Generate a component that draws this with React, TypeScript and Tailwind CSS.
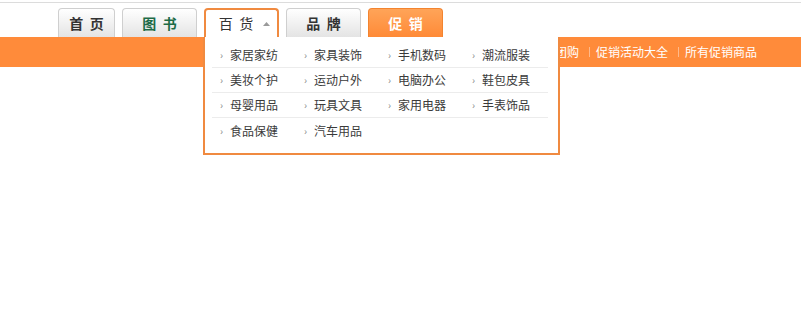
import React from 'react';

const cjk = { fontFamily: '"Noto Sans CJK SC", "Noto Sans", sans-serif' };

const categories = [
  ['家居家纺', '家具装饰', '手机数码', '潮流服装'],
  ['美妆个护', '运动户外', '电脑办公', '鞋包皮具'],
  ['母婴用品', '玩具文具', '家用电器', '手表饰品'],
  ['食品保健', '汽车用品'],
];

const links = ['品牌团购', '促销活动大全', '所有促销商品'];

const Tab: React.FC<{ label: string; width: string; color?: string }> = ({ label, width, color = 'text-[#333]' }) => (
  <div
    className={`${width} h-[29px] flex items-center justify-center rounded-t-[4px] border border-b-0 border-[#cfcfcf] bg-gradient-to-b from-white to-[#e4e4e4] text-[14px] font-bold ${color}`}
  >
    <span className="whitespace-pre">{label}</span>
  </div>
);

const App: React.FC = () => {
  return (
    <div className="relative w-full h-[318px] bg-white" style={cjk}>
      <div className="pt-[2px]">
        <div className="border-t border-[#dcdcdc]" />
      </div>

      {/* tabs */}
      <div className="flex items-end gap-[7px] pl-[58px] pt-[5px]">
        <Tab label="首  页" width="w-[57px]" />
        <Tab label="图  书" width="w-[75px]" color="text-[#1d6b47]" />
        <div className="relative z-20 w-[75px] h-[29px] flex items-center justify-center gap-[10px] rounded-t-[4px] border-2 border-b-0 border-[#f08a40] bg-white text-[14px] text-[#333] pl-[6px]">
          <span className="whitespace-pre">百  货</span>
          <svg width="7" height="4" viewBox="0 0 7 4">
            <polygon points="0,4 3.5,0 7,4" fill="#9a9a9a" />
          </svg>
        </div>
        <Tab label="品  牌" width="w-[75px]" />
        <div className="w-[75px] h-[29px] flex items-center justify-center rounded-t-[4px] border border-b-0 border-[#f3842f] bg-gradient-to-b from-[#ffa458] to-[#ff8a36] text-[14px] font-bold text-white">
          <span className="whitespace-pre">促  销</span>
        </div>
      </div>

      {/* orange bar */}
      <div className="h-[30px] bg-[#ff8b3a] flex items-center justify-end pr-[44px]">
        {links.map((l, i) => (
          <div key={l} className="flex items-center">
            {i > 0 && <span className="w-px h-[10px] bg-[#ffb98a] ml-[10px] mr-[6px]" />}
            <span className="text-[12px] leading-[30px] text-white">{l}</span>
          </div>
        ))}
      </div>

      {/* dropdown */}
      <div className="absolute z-10 left-[203px] top-[37px] w-[357px] h-[118px] bg-white border-2 border-t-0 border-[#f08a40] pl-[7px] pt-[6px]">
        {categories.map((row, r) => (
          <div
            key={r}
            className={`flex w-[336px] h-[25px] items-center ${r < categories.length - 1 ? 'border-b border-[#ececec]' : ''}`}
          >
            {row.map((c) => (
              <div key={c} className="w-[84px] flex items-center pl-[8px] text-[12px] text-[#3a3a3a]">
                <span className="w-[10px] text-[10px] text-[#8a8a8a] leading-none">›</span>
                <span className="leading-[24px]">{c}</span>
              </div>
            ))}
          </div>
        ))}
      </div>
    </div>
  );
};

export default App;
